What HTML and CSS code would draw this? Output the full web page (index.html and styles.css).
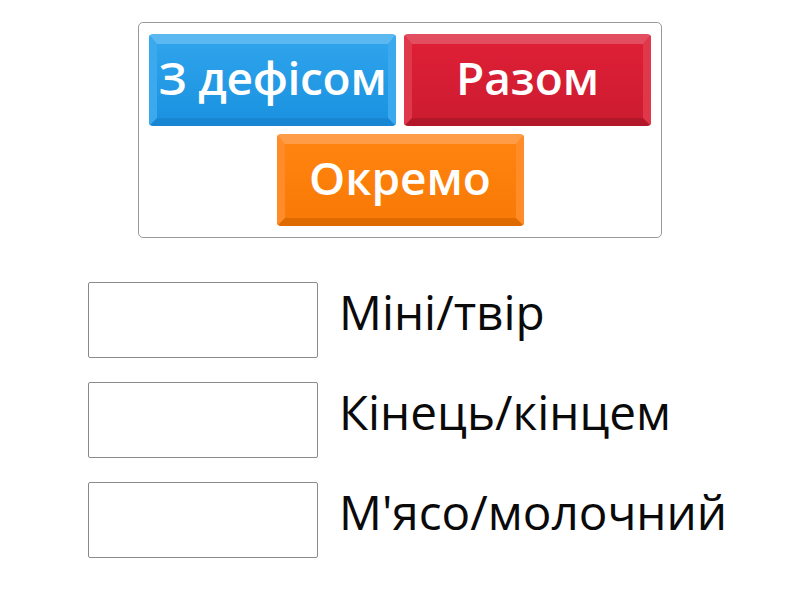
FILE: index.html
```html
<!DOCTYPE html>
<html lang="uk">
<head>
<meta charset="utf-8">
<link rel="stylesheet" href="styles.css">
</head>
<body>
<div class="page">
  <div class="bank">
    <div class="row">
      <div class="tile blue"><span class="fit">З дефісом</span></div>
      <div class="tile red">Разом</div>
    </div>
    <div class="row">
      <div class="tile orange">Окремо</div>
    </div>
  </div>
  <div class="questions">
    <div class="q"><div class="slot"></div><div class="label">Міні/твір</div></div>
    <div class="q"><div class="slot"></div><div class="label">Кінець/кінцем</div></div>
    <div class="q"><div class="slot"></div><div class="label">М'ясо/молочний</div></div>
  </div>
</div>
</body>
</html>
```
FILE: styles.css
```css
html, body {
  margin: 0;
  padding: 0;
  background: #ffffff;
}
.page {
  width: 800px;
  height: 600px;
  font-family: "Open Sans", "Liberation Sans", sans-serif;
  display: flex;
  flex-direction: column;
  align-items: flex-start;
}
.bank {
  margin: 22px 0 0 138px;
  width: 524px;
  height: 216px;
  box-sizing: border-box;
  border: 1px solid #9a9a9a;
  border-radius: 5px;
  padding: 11px 10px 10px 10px;
  display: flex;
  flex-direction: column;
  align-items: center;
  gap: 8px;
}
.row {
  display: flex;
  gap: 8px;
  justify-content: center;
}
.tile {
  width: 247px;
  height: 92px;
  box-sizing: border-box;
  border-radius: 4px;
  border-style: solid;
  border-width: 10px 8px 8px 8px;
  display: flex;
  align-items: center;
  justify-content: center;
  color: #ffffff;
  font-weight: 600;
  font-size: 46px;
  line-height: 1;
  white-space: nowrap;
  padding-bottom: 8px;
}
.fit {
  font-size: 46px;
  letter-spacing: -0.3px;
}
.blue {
  background: linear-gradient(#2fa3ec, #1b93e0);
  border-color: #5cb8f1 #3aa9ee #1886d3 #3aa9ee;
}
.red {
  background: linear-gradient(#de1f36, #cd1c30);
  border-color: #e24d5f #e0384b #b3182a #e0384b;
}
.orange {
  background: linear-gradient(#ff840f, #f97a06);
  border-color: #ff9c47 #ff8c28 #de6a00 #ff8c28;
}
.questions {
  margin: 44px 0 0 88px;
  display: flex;
  flex-direction: column;
  gap: 24px;
}
.q {
  display: flex;
  align-items: center;
  gap: 21px;
}
.slot {
  width: 230px;
  height: 76px;
  box-sizing: border-box;
  border: 1px solid #8a8a8a;
  border-radius: 2px;
  background: #fff;
}
.label {
  font-size: 47.7px;
  color: #0a0a0a;
  line-height: 1;
  padding-bottom: 16px;
}
```
